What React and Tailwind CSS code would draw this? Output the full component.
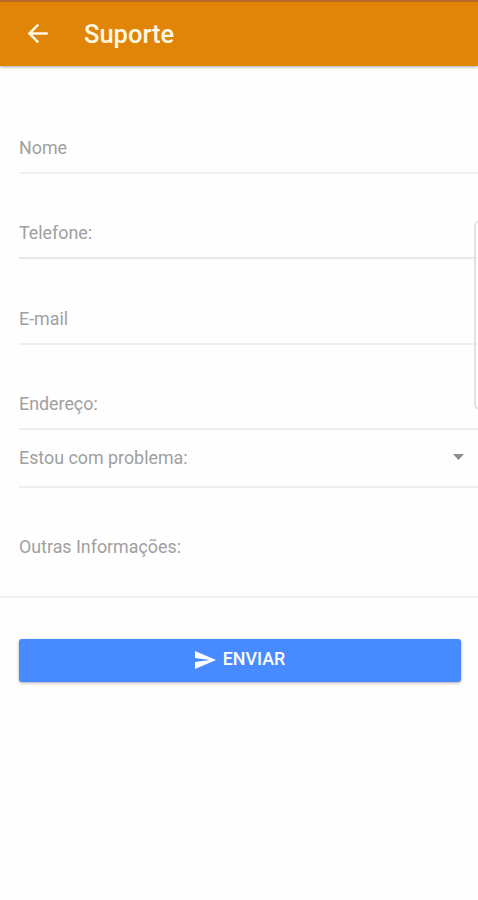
const fields = [
  { label: "Nome", box: "h-[108px] pb-[12px]", line: "border-b-2 border-[#f1f1f1]" },
  { label: "Telefone:", box: "h-[85px] pb-[12px]", line: "border-b-2 border-[#e9e9e9]" },
  { label: "E-mail", box: "h-[86px] pb-[12px]", line: "border-b-2 border-[#eeeeee]" },
  { label: "Endereço:", box: "h-[85px] pb-[12px]", line: "border-b-2 border-[#eeeeee]" },
];

function Field({ label, box, line }) {
  return (
    <div className={`ml-[19px] flex items-end ${box} ${line}`}>
      <label className="leading-6">{label}</label>
    </div>
  );
}

export default function App() {
  return (
    <div className="relative h-[900px] w-full overflow-hidden bg-[#fefefe] font-[Roboto,sans-serif] text-[17.85px] text-[#a0a0a0]">
      <header className="flex h-[66px] items-center border-t-2 border-[#b86b25] bg-[#e08508] pl-[27px] text-[#fff8e4] shadow-[0_1px_3px_rgba(0,0,0,0.35)]">
        <svg className="h-[22px] w-[22px]" viewBox="0 0 22 22" fill="none" stroke="currentColor" strokeWidth="2.5">
          <path d="M11.2 1.6 2.4 10.5l8.8 8.9M2.4 10.5h18.4" />
        </svg>
        <h1 className="ml-[35px] text-[25.5px] leading-8 font-medium">Suporte</h1>
      </header>

      <main>
        {fields.map((f) => (
          <Field key={f.label} {...f} />
        ))}
        <div className="ml-[19px] flex h-[58px] items-center justify-between border-b-2 border-[#eeeeee] pr-[14px]">
          <span className="leading-6">Estou com problema:</span>
          <svg className="mb-[2px] h-[6px] w-[11px]" viewBox="0 0 11 6" fill="#8c8c8c">
            <path d="M0 0h11L5.5 6z" />
          </svg>
        </div>
        <div className="flex h-[110px] items-center border-b-2 border-[#f0f0f0] pt-[9px] pl-[19px]">
          <label className="leading-6">Outras Informações:</label>
        </div>
        <button className="mt-[41px] ml-[19px] flex h-[43px] w-[442px] items-center justify-center rounded-[3px] bg-[#488aff] pb-[2px] font-medium text-white shadow-[0_1px_3px_rgba(0,0,0,0.35)]">
          <svg className="mr-[7px] h-[18px] w-[21px]" viewBox="0 0 21 18" fill="currentColor">
            <path d="M0 18 21 9 0 0v7l15 2-15 2z" />
          </svg>
          ENVIAR
        </button>
      </main>

      <div className="absolute top-[220px] -right-[8px] h-[190px] w-[12px] rounded-[6px] border-2 border-[#e2e2e2] bg-white/50" />
    </div>
  );
}
